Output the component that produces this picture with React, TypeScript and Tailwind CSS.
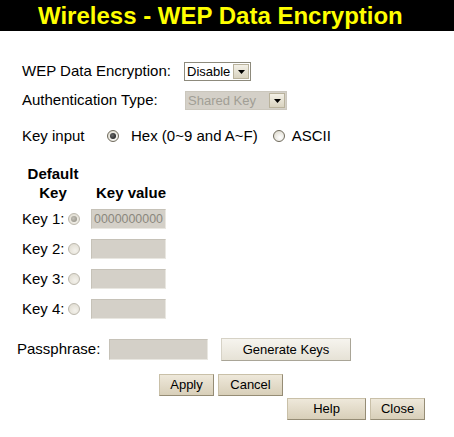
import React from "react";

const Radio = ({ checked = false, disabled = false }: { checked?: boolean; disabled?: boolean }) => (
  <span
    className={
      "inline-flex items-center justify-center w-[12px] h-[12px] rounded-full border " +
      (disabled
        ? "border-[#bdb9ae] bg-[radial-gradient(circle_at_60%_65%,#f4f2ec,#dcd8cc)]"
        : "border-[#6f6a5c] bg-[radial-gradient(circle_at_60%_65%,#ffffff,#d8d4c6)]")
    }
  >
    {checked && (
      <span
        className={
          "w-[6px] h-[6px] rounded-full " +
          (disabled ? "bg-[radial-gradient(circle_at_40%_40%,#c4c1b8,#8c897f)]" : "bg-[radial-gradient(circle_at_40%_40%,#6a6a6a,#111111)]")
        }
      />
    )}
  </span>
);

const Arrow = () => (
  <span className="flex items-center justify-center w-[16px] h-[15px] bg-[linear-gradient(#f3f0e6,#d9d3c0)] border border-[#b9b29c]">
    <svg width="7" height="4" viewBox="0 0 7 4">
      <path d="M0 0h7L3.5 4z" fill="#000" />
    </svg>
  </span>
);

const TanButton = ({ label, w }: { label: string; w: string }) => (
  <button
    className={
      w +
      " h-[22px] text-[13px] text-black bg-[linear-gradient(#eee8da,#d8cfb9)] border border-[#c9c0a8] border-r-[#958c75] border-b-[#958c75]"
    }
  >
    {label}
  </button>
);

const KeyRow = ({ n, value, checked }: { n: number; value?: string; checked?: boolean }) => (
  <div className="flex items-center h-[20px]">
    <span className="w-[46px]">Key {n}:</span>
    <Radio checked={checked} disabled />
    <span className="ml-[11px] w-[75px] h-[20px] bg-[#d4d0c8] border border-[#c6c2b8] border-b-[#e9e7e1] border-r-[#e9e7e1] text-[12.4px] text-[#8a877d] pl-[2px] leading-[18px] overflow-hidden">
      {value}
    </span>
  </div>
);

export default function App() {
  return (
    <div className="w-[454px] h-[437px] bg-white font-['Liberation_Sans',Arial,sans-serif] text-[15px] text-black overflow-hidden">
      <div className="h-[31px] bg-black text-[#ffff00] font-bold text-[24px] leading-[31px] pl-[38px]">
        Wireless - WEP Data Encryption
      </div>

      <div className="pl-[22px]">
        <div className="flex items-center h-[19px] mt-[31px]">
          <span className="w-[162px]">WEP Data Encryption:</span>
          <span className="flex items-center justify-between w-[67px] h-[19px] border border-[#8d8a7c] bg-white pl-[2px] pr-[1px] text-[13px]">
            Disable
            <Arrow />
          </span>
        </div>

        <div className="flex items-center h-[19px] mt-[10px]">
          <span className="w-[163px]">Authentication Type:</span>
          <span className="flex items-center justify-between w-[102px] h-[19px] border border-[#cbc7bd] bg-[#d4d0c8] pl-[2px] pr-[1px] text-[13px] text-[#a19e95]">
            Shared Key
            <Arrow />
          </span>
        </div>

        <div className="flex items-center h-[20px] mt-[16px]">
          <span className="w-[85px]">Key input</span>
          <Radio checked />
          <span className="ml-[12px]">Hex (0~9 and A~F)</span>
          <span className="ml-[15px] flex items-center">
            <Radio />
          </span>
          <span className="ml-[7px]">ASCII</span>
        </div>

        <div className="flex mt-[18px] font-bold leading-[19px]">
          <div className="w-[62px] flex flex-col items-center">
            <span>Default</span>
            <span>Key</span>
          </div>
          <div className="flex flex-col justify-end ml-[12px]">
            <span>Key value</span>
          </div>
        </div>

        <div className="mt-[7px] flex flex-col gap-[10px]">
          <KeyRow n={1} value="0000000000" checked />
          <KeyRow n={2} />
          <KeyRow n={3} />
          <KeyRow n={4} />
        </div>
      </div>

      <div className="flex items-center h-[23px] mt-[19px] pl-[17px]">
        <span className="w-[92px]">Passphrase:</span>
        <span className="w-[99px] h-[21px] bg-[#d4d0c8] border border-[#c6c2b8] border-b-[#e9e7e1] border-r-[#e9e7e1]" />
        <button className="ml-[13px] w-[130px] h-[23px] text-[13px] bg-[linear-gradient(#f6f4ee,#e6e2d6)] border border-[#d6d2c6] border-r-[#a9a597] border-b-[#a9a597]">
          Generate Keys
        </button>
      </div>

      <div className="flex mt-[13px] pl-[159px] gap-[4px]">
        <TanButton label="Apply" w="w-[55px]" />
        <TanButton label="Cancel" w="w-[65px]" />
      </div>

      <div className="flex mt-[2px] pl-[287px] gap-[4px]">
        <TanButton label="Help" w="w-[79px]" />
        <TanButton label="Close" w="w-[55px]" />
      </div>
    </div>
  );
}
